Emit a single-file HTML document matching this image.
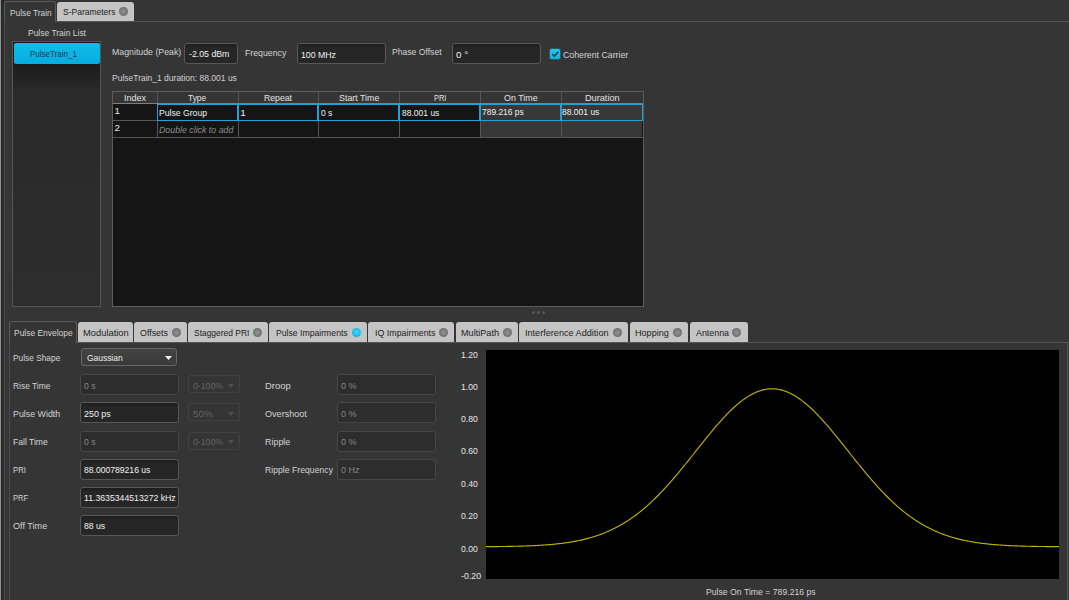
<!DOCTYPE html>
<html><head><meta charset="utf-8"><style>
html,body{margin:0;padding:0;}
body{width:1069px;height:600px;overflow:hidden;position:relative;background:#353535;font-family:"Liberation Sans",sans-serif;}
.b{position:absolute;}
.t{position:absolute;white-space:nowrap;line-height:10px;height:10px;transform-origin:0 50%;}
</style></head><body>
<div class="b" style="left:0px;top:0px;width:1px;height:600px;background:#8e8e8e"></div>
<div class="b" style="left:1px;top:0px;width:3px;height:600px;background:#2a2a2a"></div>
<div class="b" style="left:4px;top:21px;width:1px;height:579px;background:#4c4c4c"></div>
<div class="b" style="left:55px;top:21px;width:1014px;height:1px;background:#555"></div>
<div class="b" style="left:4px;top:1px;width:52px;height:21px;border:1px solid #5a5a5a;border-bottom:none;border-radius:3px 3px 0 0;background:#353535;box-sizing:border-box"></div>
<div class="t" style="left:9.5px;top:7.95px;color:#d2d2d2;font-size:9.8px;transform:scaleX(0.8501);">Pulse Train</div>
<div class="b" style="left:57px;top:2px;width:77px;height:19px;background:#c4c4c4;border-radius:3px 3px 0 0"></div>
<div class="t" style="left:63.0px;top:7.15px;color:#1c1c1c;font-size:9.8px;transform:scaleX(0.8667);">S-Parameters</div>
<div class="b" style="left:118.7px;top:7.300000000000001px;width:9px;height:9px;border-radius:50%;background:radial-gradient(circle at 50% 50%,#929292 0,#7a7a7a 50%,#676767 78%,#5c5c5c 100%)"></div>
<div class="t" style="left:28.1px;top:27.55px;color:#d2d2d2;font-size:9.8px;transform:scaleX(0.8656);">Pulse Train List</div>
<div class="b" style="left:12px;top:41px;width:89px;height:266px;border:1px solid #555;box-sizing:border-box;background:linear-gradient(#181818 0px,#1b1b1b 23px,#2a2a2a 50px,#2d2d2d 100%)"></div>
<div class="b" style="left:14px;top:43px;width:86px;height:20.5px;background:linear-gradient(#0fbde9,#06ade0);border-radius:2px"></div>
<div class="t" style="left:30.2px;top:48.55px;color:#163a46;font-size:9.8px;transform:scaleX(0.8164);">PulseTrain_1</div>
<div class="t" style="left:112.1px;top:47.35px;color:#d2d2d2;font-size:9.8px;transform:scaleX(0.8949);">Magnitude (Peak)</div>
<div class="b" style="left:184px;top:43px;width:54px;height:21px;border:1px solid #575757;border-radius:3px;background:linear-gradient(#1c1c1c,#262626 4px);box-sizing:border-box"></div>
<div class="t" style="left:188.6px;top:49.45px;color:#f0f0f0;font-size:9.8px;transform:scaleX(0.8938);">-2.05 dBm</div>
<div class="t" style="left:244.6px;top:48.15px;color:#d2d2d2;font-size:9.8px;transform:scaleX(0.8921);">Frequency</div>
<div class="b" style="left:297px;top:43px;width:89px;height:21px;border:1px solid #575757;border-radius:3px;background:linear-gradient(#1c1c1c,#262626 4px);box-sizing:border-box"></div>
<div class="t" style="left:301.1px;top:49.75px;color:#f0f0f0;font-size:9.8px;transform:scaleX(0.8902);">100 MHz</div>
<div class="t" style="left:392.1px;top:47.45px;color:#d2d2d2;font-size:9.8px;transform:scaleX(0.8782);">Phase Offset</div>
<div class="b" style="left:452px;top:43px;width:89px;height:21px;border:1px solid #575757;border-radius:3px;background:linear-gradient(#1c1c1c,#262626 4px);box-sizing:border-box"></div>
<div class="t" style="left:456.1px;top:49.75px;color:#f0f0f0;font-size:9.8px;">0 °</div>
<div class="b" style="left:549px;top:47.5px;width:12px;height:12px;border-radius:3px;background:rgba(20,180,220,0.28)"></div>
<div class="b" style="left:550px;top:48.5px;width:10px;height:10px;border-radius:1.5px;background:linear-gradient(#22c6f0,#10b0e0)"></div>
<svg class="b" style="left:550px;top:48.5px" width="10" height="10"><path d="M2.2 5 L4.4 7.2 L8.2 2.8" stroke="#23363e" stroke-width="1.5" fill="none"/></svg>
<div class="t" style="left:562.9px;top:49.75px;color:#d2d2d2;font-size:9.8px;transform:scaleX(0.8935);">Coherent Carrier</div>
<div class="t" style="left:112.1px;top:73.35px;color:#d2d2d2;font-size:9.8px;transform:scaleX(0.8674);">PulseTrain_1 duration: 88.001 us</div>
<div class="b" style="left:112px;top:91px;width:532px;height:216px;background:#151515;border:1px solid #5c5c5c;box-sizing:border-box"></div>
<div class="b" style="left:113px;top:92px;width:530px;height:11px;background:#353535"></div>
<div class="b" style="left:113px;top:103px;width:530px;height:1px;background:#808080"></div>
<div class="b" style="left:157px;top:92px;width:1px;height:11px;background:#555"></div>
<div class="b" style="left:238px;top:92px;width:1px;height:11px;background:#555"></div>
<div class="b" style="left:318px;top:92px;width:1px;height:11px;background:#555"></div>
<div class="b" style="left:399px;top:92px;width:1px;height:11px;background:#555"></div>
<div class="b" style="left:480px;top:92px;width:1px;height:11px;background:#555"></div>
<div class="b" style="left:561px;top:92px;width:1px;height:11px;background:#555"></div>
<div class="t" style="left:123.5px;top:93.25px;color:#e2e2e2;font-size:9.8px;transform:scaleX(0.9230);">Index</div>
<div class="t" style="left:188.3px;top:93.25px;color:#e2e2e2;font-size:9.8px;transform:scaleX(0.8551);">Type</div>
<div class="t" style="left:264.3px;top:93.25px;color:#e2e2e2;font-size:9.8px;transform:scaleX(0.8861);">Repeat</div>
<div class="t" style="left:339.1px;top:93.25px;color:#e2e2e2;font-size:9.8px;transform:scaleX(0.9049);">Start Time</div>
<div class="t" style="left:433.7px;top:93.25px;color:#e2e2e2;font-size:9.8px;transform:scaleX(0.7584);">PRI</div>
<div class="t" style="left:504.3px;top:93.25px;color:#e2e2e2;font-size:9.8px;transform:scaleX(0.9077);">On Time</div>
<div class="t" style="left:584.8px;top:93.25px;color:#e2e2e2;font-size:9.8px;transform:scaleX(0.9352);">Duration</div>
<div class="b" style="left:157px;top:104px;width:1px;height:34px;background:#555"></div>
<div class="b" style="left:238px;top:104px;width:1px;height:34px;background:#555"></div>
<div class="b" style="left:318px;top:104px;width:1px;height:34px;background:#555"></div>
<div class="b" style="left:399px;top:104px;width:1px;height:34px;background:#555"></div>
<div class="b" style="left:480px;top:104px;width:1px;height:34px;background:#555"></div>
<div class="b" style="left:561px;top:104px;width:1px;height:34px;background:#555"></div>
<div class="b" style="left:113px;top:120px;width:530px;height:1px;background:#555"></div>
<div class="b" style="left:113px;top:137px;width:530px;height:1px;background:#555"></div>
<div class="b" style="left:481px;top:104px;width:80px;height:16px;background:#383838"></div>
<div class="b" style="left:562px;top:104px;width:80px;height:16px;background:#383838"></div>
<div class="b" style="left:481px;top:121px;width:80px;height:16px;background:#383838"></div>
<div class="b" style="left:562px;top:121px;width:80px;height:16px;background:#383838"></div>
<div class="b" style="left:157px;top:104px;width:81px;height:17px;border:1px solid #22a0dc;box-sizing:border-box"></div>
<div class="b" style="left:238px;top:104px;width:80px;height:17px;border:1px solid #22a0dc;box-sizing:border-box"></div>
<div class="b" style="left:318px;top:104px;width:81px;height:17px;border:1px solid #22a0dc;box-sizing:border-box"></div>
<div class="b" style="left:399px;top:104px;width:81px;height:17px;border:1px solid #22a0dc;box-sizing:border-box"></div>
<div class="b" style="left:480px;top:104px;width:81px;height:17px;border:1px solid #22a0dc;box-sizing:border-box"></div>
<div class="b" style="left:561px;top:104px;width:82px;height:17px;border:1px solid #22a0dc;box-sizing:border-box"></div>
<div class="t" style="left:114.6px;top:105.75px;color:#e8e8e8;font-size:9.8px;">1</div>
<div class="t" style="left:114.6px;top:123.05px;color:#e8e8e8;font-size:9.8px;">2</div>
<div class="t" style="left:158.9px;top:107.75px;color:#f0f0f0;font-size:9.8px;transform:scaleX(0.8811);">Pulse Group</div>
<div class="t" style="left:158.9px;top:124.75px;color:#8a8a8a;font-size:9.8px;font-style:italic;transform:scaleX(0.8976);">Double click to add</div>
<div class="t" style="left:240.2px;top:107.75px;color:#f0f0f0;font-size:9.8px;">1</div>
<div class="t" style="left:321.1px;top:107.75px;color:#f0f0f0;font-size:9.8px;transform:scaleX(0.8703);">0 s</div>
<div class="t" style="left:401.8px;top:107.75px;color:#f0f0f0;font-size:9.8px;transform:scaleX(0.8684);">88.001 us</div>
<div class="t" style="left:482.1px;top:107.45px;color:#f0f0f0;font-size:9.8px;transform:scaleX(0.8616);">789.216 ps</div>
<div class="t" style="left:562.2px;top:107.45px;color:#f0f0f0;font-size:9.8px;transform:scaleX(0.8684);">88.001 us</div>
<div class="b" style="left:531.5px;top:311px;width:3px;height:3px;border-radius:50%;background:#575757"></div>
<div class="b" style="left:536.7px;top:311px;width:3px;height:3px;border-radius:50%;background:#575757"></div>
<div class="b" style="left:541.8px;top:311px;width:3px;height:3px;border-radius:50%;background:#575757"></div>
<div class="b" style="left:9px;top:342px;width:1059px;height:1px;background:#555"></div>
<div class="b" style="left:9px;top:342px;width:1px;height:258px;background:#4c4c4c"></div>
<div class="b" style="left:1067px;top:342px;width:1px;height:258px;background:#555"></div>
<div class="b" style="left:1068px;top:342px;width:1px;height:258px;background:#3a3a3a"></div>
<div class="b" style="left:9px;top:321px;width:68px;height:22px;border:1px solid #5a5a5a;border-bottom:none;border-radius:3px 3px 0 0;background:#353535;box-sizing:border-box"></div>
<div class="t" style="left:13.8px;top:327.65px;color:#d2d2d2;font-size:9.8px;transform:scaleX(0.8617);">Pulse Envelope</div>
<div class="b" style="left:78px;top:322px;width:55px;height:20px;background:#c4c4c4;border-radius:3px 3px 0 0"></div>
<div class="t" style="left:82.5px;top:327.65px;color:#1c1c1c;font-size:9.8px;transform:scaleX(0.9543);">Modulation</div>
<div class="b" style="left:134px;top:322px;width:53px;height:20px;background:#c4c4c4;border-radius:3px 3px 0 0"></div>
<div class="t" style="left:140.3px;top:327.65px;color:#1c1c1c;font-size:9.8px;transform:scaleX(0.9044);">Offsets</div>
<div class="b" style="left:172.0px;top:327.8px;width:9px;height:9px;border-radius:50%;background:radial-gradient(circle at 50% 50%,#929292 0,#7a7a7a 50%,#676767 78%,#5c5c5c 100%)"></div>
<div class="b" style="left:188px;top:322px;width:80px;height:20px;background:#c4c4c4;border-radius:3px 3px 0 0"></div>
<div class="t" style="left:194.1px;top:327.65px;color:#1c1c1c;font-size:9.8px;transform:scaleX(0.8617);">Staggered PRI</div>
<div class="b" style="left:253.2px;top:327.8px;width:9px;height:9px;border-radius:50%;background:radial-gradient(circle at 50% 50%,#929292 0,#7a7a7a 50%,#676767 78%,#5c5c5c 100%)"></div>
<div class="b" style="left:269px;top:322px;width:98px;height:20px;background:#c4c4c4;border-radius:3px 3px 0 0"></div>
<div class="t" style="left:276.3px;top:327.65px;color:#1c1c1c;font-size:9.8px;transform:scaleX(0.8836);">Pulse Impairments</div>
<div class="b" style="left:352.0px;top:327.8px;width:9px;height:9px;border-radius:50%;background:radial-gradient(circle at 50% 45%,#3fdcff 0,#14b4e6 70%,#0e9cd0 100%)"></div>
<div class="b" style="left:368px;top:322px;width:86px;height:20px;background:#c4c4c4;border-radius:3px 3px 0 0"></div>
<div class="t" style="left:374.5px;top:327.65px;color:#1c1c1c;font-size:9.8px;transform:scaleX(0.9035);">IQ Impairments</div>
<div class="b" style="left:438.8px;top:327.8px;width:9px;height:9px;border-radius:50%;background:radial-gradient(circle at 50% 50%,#929292 0,#7a7a7a 50%,#676767 78%,#5c5c5c 100%)"></div>
<div class="b" style="left:456px;top:322px;width:62px;height:20px;background:#c4c4c4;border-radius:3px 3px 0 0"></div>
<div class="t" style="left:461.3px;top:327.65px;color:#1c1c1c;font-size:9.8px;transform:scaleX(0.9311);">MultiPath</div>
<div class="b" style="left:502.5px;top:327.8px;width:9px;height:9px;border-radius:50%;background:radial-gradient(circle at 50% 50%,#929292 0,#7a7a7a 50%,#676767 78%,#5c5c5c 100%)"></div>
<div class="b" style="left:519px;top:322px;width:109px;height:20px;background:#c4c4c4;border-radius:3px 3px 0 0"></div>
<div class="t" style="left:525.3px;top:327.65px;color:#1c1c1c;font-size:9.8px;transform:scaleX(0.9294);">Interference Addition</div>
<div class="b" style="left:612.5px;top:327.8px;width:9px;height:9px;border-radius:50%;background:radial-gradient(circle at 50% 50%,#929292 0,#7a7a7a 50%,#676767 78%,#5c5c5c 100%)"></div>
<div class="b" style="left:630px;top:322px;width:58px;height:20px;background:#c4c4c4;border-radius:3px 3px 0 0"></div>
<div class="t" style="left:635.3px;top:327.65px;color:#1c1c1c;font-size:9.8px;transform:scaleX(0.9268);">Hopping</div>
<div class="b" style="left:672.8px;top:327.8px;width:9px;height:9px;border-radius:50%;background:radial-gradient(circle at 50% 50%,#929292 0,#7a7a7a 50%,#676767 78%,#5c5c5c 100%)"></div>
<div class="b" style="left:690px;top:322px;width:58px;height:20px;background:#c4c4c4;border-radius:3px 3px 0 0"></div>
<div class="t" style="left:695.9px;top:327.65px;color:#1c1c1c;font-size:9.8px;transform:scaleX(0.9044);">Antenna</div>
<div class="b" style="left:732.3px;top:327.8px;width:9px;height:9px;border-radius:50%;background:radial-gradient(circle at 50% 50%,#929292 0,#7a7a7a 50%,#676767 78%,#5c5c5c 100%)"></div>
<div class="t" style="left:13.1px;top:352.65px;color:#d2d2d2;font-size:9.8px;transform:scaleX(0.8507);">Pulse Shape</div>
<div class="b" style="left:81px;top:348px;width:96px;height:18px;border:1px solid #666;border-radius:3px;background:linear-gradient(#434343,#3a3a3a);box-sizing:border-box"></div>
<div class="t" style="left:86.6px;top:352.65px;color:#f0f0f0;font-size:9.8px;transform:scaleX(0.8595);">Gaussian</div>
<svg class="b" style="left:165px;top:356px" width="7" height="4"><path d="M0 0 H7 L3.5 4 Z" fill="#f0f0f0"/></svg>
<div class="t" style="left:13.1px;top:380.55px;color:#d2d2d2;font-size:9.8px;transform:scaleX(0.8579);">Rise Time</div>
<div class="b" style="left:80px;top:374px;width:99px;height:21px;border:1px solid #474747;border-radius:3px;background:#2d2d2d;box-sizing:border-box"></div>
<div class="t" style="left:83.8px;top:380.55px;color:#878787;font-size:9.8px;transform:scaleX(0.8785);">0 s</div>
<div class="b" style="left:188px;top:375px;width:52px;height:18px;border:1px solid #414141;border-radius:2px;background:#353535;box-sizing:border-box"></div>
<div class="t" style="left:193.0px;top:380.55px;color:#646464;font-size:9.8px;transform:scaleX(0.8910);">0-100%</div>
<svg class="b" style="left:228px;top:384.1px" width="6" height="4"><path d="M0 0 H6 L3 4 Z" fill="#4e4e4e"/></svg>
<div class="t" style="left:13.1px;top:408.55px;color:#d2d2d2;font-size:9.8px;transform:scaleX(0.9030);">Pulse Width</div>
<div class="b" style="left:80px;top:402px;width:99px;height:21px;border:1px solid #575757;border-radius:3px;background:linear-gradient(#1c1c1c,#262626 4px);box-sizing:border-box"></div>
<div class="t" style="left:83.8px;top:408.55px;color:#f0f0f0;font-size:9.8px;transform:scaleX(0.9079);">250 ps</div>
<div class="b" style="left:188px;top:403px;width:52px;height:18px;border:1px solid #414141;border-radius:2px;background:#353535;box-sizing:border-box"></div>
<div class="t" style="left:193.0px;top:408.55px;color:#646464;font-size:9.8px;">50%</div>
<svg class="b" style="left:228px;top:412.1px" width="6" height="4"><path d="M0 0 H6 L3 4 Z" fill="#4e4e4e"/></svg>
<div class="t" style="left:13.1px;top:436.55px;color:#d2d2d2;font-size:9.8px;transform:scaleX(0.8751);">Fall Time</div>
<div class="b" style="left:80px;top:431px;width:99px;height:21px;border:1px solid #474747;border-radius:3px;background:#2d2d2d;box-sizing:border-box"></div>
<div class="t" style="left:83.8px;top:436.55px;color:#878787;font-size:9.8px;transform:scaleX(0.8785);">0 s</div>
<div class="b" style="left:188px;top:432px;width:52px;height:18px;border:1px solid #414141;border-radius:2px;background:#353535;box-sizing:border-box"></div>
<div class="t" style="left:193.0px;top:436.55px;color:#646464;font-size:9.8px;transform:scaleX(0.8910);">0-100%</div>
<svg class="b" style="left:228px;top:440.1px" width="6" height="4"><path d="M0 0 H6 L3 4 Z" fill="#4e4e4e"/></svg>
<div class="t" style="left:13.1px;top:464.55px;color:#d2d2d2;font-size:9.8px;transform:scaleX(0.7969);">PRI</div>
<div class="b" style="left:80px;top:459px;width:99px;height:21px;border:1px solid #575757;border-radius:3px;background:linear-gradient(#1c1c1c,#262626 4px);box-sizing:border-box"></div>
<div class="t" style="left:83.8px;top:464.55px;color:#f0f0f0;font-size:9.8px;transform:scaleX(0.8766);">88.000789216 us</div>
<div class="t" style="left:13.1px;top:492.55px;color:#d2d2d2;font-size:9.8px;transform:scaleX(0.7755);">PRF</div>
<div class="b" style="left:80px;top:487px;width:99px;height:21px;border:1px solid #575757;border-radius:3px;background:linear-gradient(#1c1c1c,#262626 4px);box-sizing:border-box"></div>
<div class="t" style="left:83.8px;top:492.55px;color:#f0f0f0;font-size:9.8px;transform:scaleX(0.8874);">11.3635344513272 kHz</div>
<div class="t" style="left:13.1px;top:520.55px;color:#d2d2d2;font-size:9.8px;transform:scaleX(0.9290);">Off Time</div>
<div class="b" style="left:80px;top:515px;width:99px;height:21px;border:1px solid #575757;border-radius:3px;background:linear-gradient(#1c1c1c,#262626 4px);box-sizing:border-box"></div>
<div class="t" style="left:83.8px;top:520.55px;color:#f0f0f0;font-size:9.8px;transform:scaleX(0.8842);">88 us</div>
<div class="t" style="left:265.1px;top:380.75px;color:#d2d2d2;font-size:9.8px;transform:scaleX(0.9651);">Droop</div>
<div class="b" style="left:337px;top:374px;width:99px;height:21px;border:1px solid #474747;border-radius:3px;background:#2d2d2d;box-sizing:border-box"></div>
<div class="t" style="left:340.5px;top:380.75px;color:#878787;font-size:9.8px;transform:scaleX(0.9189);">0 %</div>
<div class="t" style="left:265.1px;top:408.75px;color:#d2d2d2;font-size:9.8px;transform:scaleX(0.9253);">Overshoot</div>
<div class="b" style="left:337px;top:402px;width:99px;height:21px;border:1px solid #474747;border-radius:3px;background:#2d2d2d;box-sizing:border-box"></div>
<div class="t" style="left:340.5px;top:408.75px;color:#878787;font-size:9.8px;transform:scaleX(0.9189);">0 %</div>
<div class="t" style="left:265.1px;top:436.75px;color:#d2d2d2;font-size:9.8px;transform:scaleX(0.9112);">Ripple</div>
<div class="b" style="left:337px;top:431px;width:99px;height:21px;border:1px solid #474747;border-radius:3px;background:#2d2d2d;box-sizing:border-box"></div>
<div class="t" style="left:340.5px;top:436.75px;color:#878787;font-size:9.8px;transform:scaleX(0.9189);">0 %</div>
<div class="t" style="left:265.1px;top:464.75px;color:#d2d2d2;font-size:9.8px;transform:scaleX(0.8854);">Ripple Frequency</div>
<div class="b" style="left:337px;top:459px;width:99px;height:21px;border:1px solid #474747;border-radius:3px;background:#2d2d2d;box-sizing:border-box"></div>
<div class="t" style="left:340.5px;top:464.75px;color:#878787;font-size:9.8px;transform:scaleX(0.9163);">0 Hz</div>
<div class="b" style="left:486px;top:350px;width:573px;height:228.5px;background:#000"></div>
<div class="t" style="left:461.1px;top:350.30px;color:#e4e4e4;font-size:9.8px;transform:scaleX(0.8801);">1.20</div>
<div class="t" style="left:461.1px;top:381.50px;color:#e4e4e4;font-size:9.8px;transform:scaleX(0.8801);">1.00</div>
<div class="t" style="left:461.1px;top:413.90px;color:#e4e4e4;font-size:9.8px;transform:scaleX(0.8801);">0.80</div>
<div class="t" style="left:461.1px;top:446.30px;color:#e4e4e4;font-size:9.8px;transform:scaleX(0.8801);">0.60</div>
<div class="t" style="left:461.1px;top:478.70px;color:#e4e4e4;font-size:9.8px;transform:scaleX(0.8801);">0.40</div>
<div class="t" style="left:461.1px;top:511.10px;color:#e4e4e4;font-size:9.8px;transform:scaleX(0.8801);">0.20</div>
<div class="t" style="left:461.1px;top:543.95px;color:#e4e4e4;font-size:9.8px;transform:scaleX(0.8801);">0.00</div>
<div class="t" style="left:461.1px;top:570.80px;color:#e4e4e4;font-size:9.8px;transform:scaleX(0.9045);">-0.20</div>
<svg class="b" style="left:486px;top:350px" width="573" height="229"><polyline points="0,196.67 1,196.66 2,196.65 3,196.65 4,196.64 5,196.63 6,196.62 7,196.61 8,196.60 9,196.59 10,196.58 11,196.57 12,196.56 13,196.55 14,196.54 15,196.53 16,196.51 17,196.50 18,196.48 19,196.47 20,196.45 21,196.44 22,196.42 23,196.40 24,196.39 25,196.37 26,196.35 27,196.32 28,196.30 29,196.28 30,196.26 31,196.23 32,196.21 33,196.18 34,196.15 35,196.12 36,196.09 37,196.06 38,196.03 39,196.00 40,195.96 41,195.92 42,195.89 43,195.85 44,195.81 45,195.76 46,195.72 47,195.67 48,195.63 49,195.58 50,195.53 51,195.47 52,195.42 53,195.36 54,195.30 55,195.24 56,195.18 57,195.11 58,195.04 59,194.97 60,194.90 61,194.83 62,194.75 63,194.67 64,194.58 65,194.50 66,194.41 67,194.31 68,194.22 69,194.12 70,194.02 71,193.91 72,193.80 73,193.69 74,193.57 75,193.45 76,193.33 77,193.20 78,193.07 79,192.93 80,192.79 81,192.64 82,192.49 83,192.34 84,192.18 85,192.02 86,191.85 87,191.67 88,191.49 89,191.31 90,191.12 91,190.92 92,190.72 93,190.52 94,190.30 95,190.08 96,189.86 97,189.63 98,189.39 99,189.14 100,188.89 101,188.63 102,188.37 103,188.10 104,187.82 105,187.53 106,187.24 107,186.94 108,186.63 109,186.31 110,185.98 111,185.65 112,185.31 113,184.96 114,184.60 115,184.23 116,183.85 117,183.47 118,183.07 119,182.67 120,182.26 121,181.83 122,181.40 123,180.96 124,180.51 125,180.04 126,179.57 127,179.09 128,178.60 129,178.09 130,177.58 131,177.06 132,176.52 133,175.97 134,175.42 135,174.85 136,174.27 137,173.68 138,173.08 139,172.46 140,171.84 141,171.20 142,170.55 143,169.89 144,169.22 145,168.54 146,167.84 147,167.13 148,166.41 149,165.68 150,164.94 151,164.18 152,163.41 153,162.63 154,161.84 155,161.03 156,160.21 157,159.39 158,158.54 159,157.69 160,156.82 161,155.95 162,155.06 163,154.15 164,153.24 165,152.31 166,151.38 167,150.43 168,149.46 169,148.49 170,147.51 171,146.51 172,145.50 173,144.49 174,143.46 175,142.42 176,141.37 177,140.31 178,139.24 179,138.15 180,137.06 181,135.96 182,134.85 183,133.73 184,132.60 185,131.46 186,130.32 187,129.16 188,128.00 189,126.83 190,125.65 191,124.46 192,123.27 193,122.07 194,120.86 195,119.65 196,118.43 197,117.21 198,115.98 199,114.75 200,113.51 201,112.27 202,111.02 203,109.77 204,108.52 205,107.26 206,106.01 207,104.75 208,103.49 209,102.23 210,100.97 211,99.71 212,98.45 213,97.19 214,95.93 215,94.67 216,93.42 217,92.17 218,90.92 219,89.67 220,88.43 221,87.20 222,85.97 223,84.74 224,83.52 225,82.31 226,81.10 227,79.91 228,78.72 229,77.54 230,76.36 231,75.20 232,74.05 233,72.91 234,71.77 235,70.65 236,69.55 237,68.45 238,67.37 239,66.30 240,65.25 241,64.20 242,63.18 243,62.17 244,61.17 245,60.20 246,59.24 247,58.29 248,57.37 249,56.46 250,55.57 251,54.70 252,53.85 253,53.01 254,52.20 255,51.41 256,50.64 257,49.89 258,49.17 259,48.46 260,47.78 261,47.12 262,46.48 263,45.87 264,45.28 265,44.72 266,44.18 267,43.66 268,43.17 269,42.70 270,42.26 271,41.85 272,41.46 273,41.09 274,40.76 275,40.45 276,40.16 277,39.90 278,39.67 279,39.47 280,39.29 281,39.14 282,39.02 283,38.92 284,38.85 285,38.81 286,38.80 287,38.81 288,38.85 289,38.92 290,39.02 291,39.14 292,39.29 293,39.47 294,39.67 295,39.90 296,40.16 297,40.45 298,40.76 299,41.09 300,41.46 301,41.85 302,42.26 303,42.70 304,43.17 305,43.66 306,44.18 307,44.72 308,45.28 309,45.87 310,46.48 311,47.12 312,47.78 313,48.46 314,49.17 315,49.89 316,50.64 317,51.41 318,52.20 319,53.01 320,53.85 321,54.70 322,55.57 323,56.46 324,57.37 325,58.29 326,59.24 327,60.20 328,61.17 329,62.17 330,63.18 331,64.20 332,65.25 333,66.30 334,67.37 335,68.45 336,69.55 337,70.65 338,71.77 339,72.91 340,74.05 341,75.20 342,76.36 343,77.54 344,78.72 345,79.91 346,81.10 347,82.31 348,83.52 349,84.74 350,85.97 351,87.20 352,88.43 353,89.67 354,90.92 355,92.17 356,93.42 357,94.67 358,95.93 359,97.19 360,98.45 361,99.71 362,100.97 363,102.23 364,103.49 365,104.75 366,106.01 367,107.26 368,108.52 369,109.77 370,111.02 371,112.27 372,113.51 373,114.75 374,115.98 375,117.21 376,118.43 377,119.65 378,120.86 379,122.07 380,123.27 381,124.46 382,125.65 383,126.83 384,128.00 385,129.16 386,130.32 387,131.46 388,132.60 389,133.73 390,134.85 391,135.96 392,137.06 393,138.15 394,139.24 395,140.31 396,141.37 397,142.42 398,143.46 399,144.49 400,145.50 401,146.51 402,147.51 403,148.49 404,149.46 405,150.43 406,151.38 407,152.31 408,153.24 409,154.15 410,155.06 411,155.95 412,156.82 413,157.69 414,158.54 415,159.39 416,160.21 417,161.03 418,161.84 419,162.63 420,163.41 421,164.18 422,164.94 423,165.68 424,166.41 425,167.13 426,167.84 427,168.54 428,169.22 429,169.89 430,170.55 431,171.20 432,171.84 433,172.46 434,173.08 435,173.68 436,174.27 437,174.85 438,175.42 439,175.97 440,176.52 441,177.06 442,177.58 443,178.09 444,178.60 445,179.09 446,179.57 447,180.04 448,180.51 449,180.96 450,181.40 451,181.83 452,182.26 453,182.67 454,183.07 455,183.47 456,183.85 457,184.23 458,184.60 459,184.96 460,185.31 461,185.65 462,185.98 463,186.31 464,186.63 465,186.94 466,187.24 467,187.53 468,187.82 469,188.10 470,188.37 471,188.63 472,188.89 473,189.14 474,189.39 475,189.63 476,189.86 477,190.08 478,190.30 479,190.52 480,190.72 481,190.92 482,191.12 483,191.31 484,191.49 485,191.67 486,191.85 487,192.02 488,192.18 489,192.34 490,192.49 491,192.64 492,192.79 493,192.93 494,193.07 495,193.20 496,193.33 497,193.45 498,193.57 499,193.69 500,193.80 501,193.91 502,194.02 503,194.12 504,194.22 505,194.31 506,194.41 507,194.50 508,194.58 509,194.67 510,194.75 511,194.83 512,194.90 513,194.97 514,195.04 515,195.11 516,195.18 517,195.24 518,195.30 519,195.36 520,195.42 521,195.47 522,195.53 523,195.58 524,195.63 525,195.67 526,195.72 527,195.76 528,195.81 529,195.85 530,195.89 531,195.92 532,195.96 533,196.00 534,196.03 535,196.06 536,196.09 537,196.12 538,196.15 539,196.18 540,196.21 541,196.23 542,196.26 543,196.28 544,196.30 545,196.32 546,196.35 547,196.37 548,196.39 549,196.40 550,196.42 551,196.44 552,196.45 553,196.47 554,196.48 555,196.50 556,196.51 557,196.53 558,196.54 559,196.55 560,196.56 561,196.57 562,196.58 563,196.59 564,196.60 565,196.61 566,196.62 567,196.63 568,196.64 569,196.65 570,196.65 571,196.66 572,196.67 573,196.67" fill="none" stroke="#bcb200" stroke-width="1.15"/></svg>
<div class="t" style="left:705.5px;top:587.45px;color:#d2d2d2;font-size:9.8px;transform:scaleX(0.8853);">Pulse On Time = 789.216 ps</div>
</body></html>
